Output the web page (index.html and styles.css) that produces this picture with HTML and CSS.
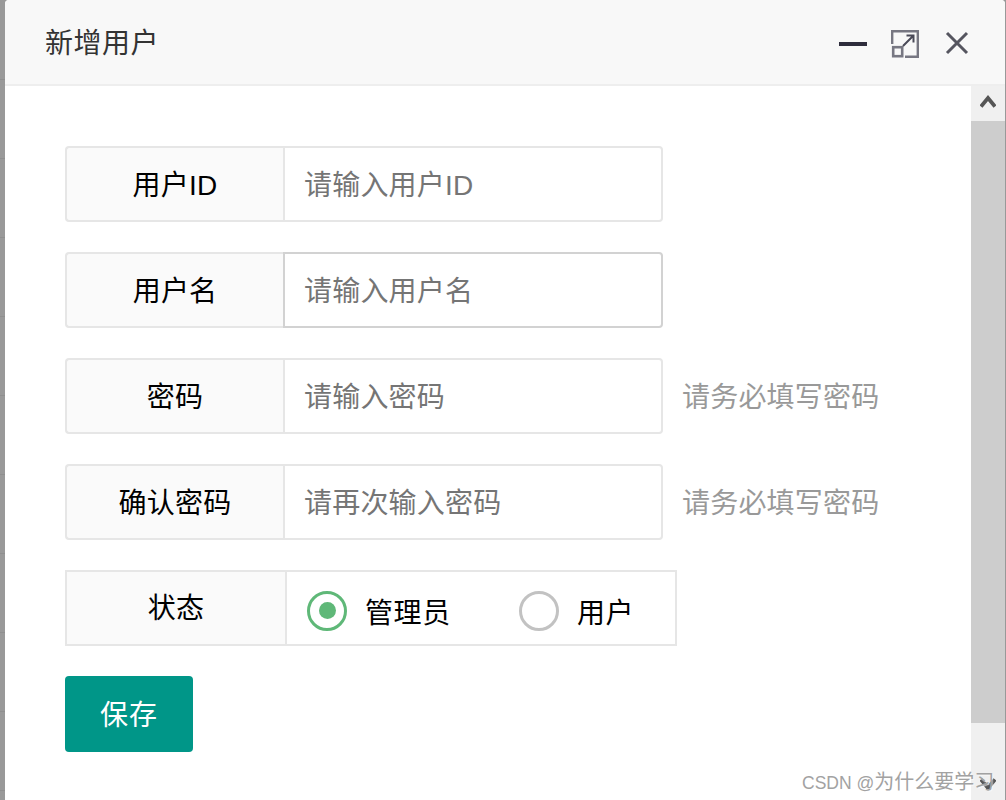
FILE: index.html
```html
<!DOCTYPE html>
<html lang="zh">
<head>
    <meta charset="UTF-8">
    <title>新增用户</title>
    <link rel="stylesheet" href="styles.css">
</head>
<body>
    <div class="backdrop"></div>
    <div class="layer">
        <div class="layer-title">
            <span class="title-text">新增用户</span>
            <div class="title-tools">
                <svg class="tool-min" width="28" height="4" viewBox="0 0 28 4"><rect width="28" height="4" fill="#2e2d3c"/></svg>
                <svg class="tool-max" width="28" height="28" viewBox="0 0 28 28" fill="none" stroke="#777782" stroke-width="2.4">
                    <path d="M1.2 14V1.2H26.8V26.8H14"/>
                    <rect x="2.2" y="17.2" width="9" height="9" stroke-width="2.6"/>
                    <path d="M12 16L22 6M15.5 5.5H22.5V12.5" stroke="#4a4a58" stroke-width="2"/>
                </svg>
                <svg class="tool-close" width="24" height="24" viewBox="0 0 24 24" fill="none" stroke="#55555f" stroke-width="3">
                    <path d="M2 2L22 22M22 2L2 22"/>
                </svg>
            </div>
        </div>
        <div class="layer-body">
            <form class="user-form">
                <div class="form-row">
                    <label class="form-label">用户ID</label>
                    <input class="form-input" type="text" placeholder="请输入用户ID">
                </div>
                <div class="form-row">
                    <label class="form-label">用户名</label>
                    <input class="form-input focused" type="text" placeholder="请输入用户名">
                </div>
                <div class="form-row">
                    <label class="form-label">密码</label>
                    <input class="form-input" type="password" placeholder="请输入密码">
                    <span class="form-aux">请务必填写密码</span>
                </div>
                <div class="form-row">
                    <label class="form-label">确认密码</label>
                    <input class="form-input" type="password" placeholder="请再次输入密码">
                    <span class="form-aux">请务必填写密码</span>
                </div>
                <div class="form-row">
                    <label class="form-label status-label"><span>状态</span></label>
                    <div class="radio-box">
                        <div class="radio-item radio-first">
                            <span class="radio-mark checked"></span>
                            <span class="radio-text">管理员</span>
                        </div>
                        <div class="radio-item">
                            <span class="radio-mark"></span>
                            <span class="radio-text">用户</span>
                        </div>
                    </div>
                </div>
                <button class="save-button" type="button">保存</button>
            </form>
            <div class="scrollbar">
                <div class="scroll-btn">
                    <svg width="16" height="13" viewBox="0 0 16 13" fill="none" stroke="#555" stroke-width="3.8"><path d="M1 11.5L8 3L15 11.5"/></svg>
                </div>
                <div class="scroll-thumb"></div>
                <div class="scroll-track">
                    <svg width="16" height="13" viewBox="0 0 16 13" fill="none" stroke="#555" stroke-width="3.8"><path d="M1 1.5L8 10L15 1.5"/></svg>
                </div>
            </div>
        </div>
    </div>
    <div class="watermark"><span class="watermark-latin">CSDN @</span>为什么要学习</div>
</body>
</html>
```

FILE: styles.css
```css
html, body {
    height: 100%;
}
body {
    margin: 0;
    display: flex;
    height: 800px;
    overflow: hidden;
    background-color: #999;
    font-family: "Liberation Sans", "Noto Sans CJK SC", sans-serif;
    font-size: 28px;
    letter-spacing: 0.2px;
    color: #000;
}
.backdrop {
    width: 5px;
    flex-shrink: 0;
    background: repeating-linear-gradient(180deg, #999 0, #999 78px, #8f8f8f 78px, #8f8f8f 79px);
    background-position: 0 1px;
}
.layer {
    flex: 1;
    display: flex;
    flex-direction: column;
    background-color: #fff;
    border-top-left-radius: 4px;
    border-top-right-radius: 4px;
    overflow: hidden;
    margin-right: 1px;
}

/* Заголовок */
.layer-title {
    height: 84px;
    flex-shrink: 0;
    display: flex;
    align-items: center;
    justify-content: space-between;
    background-color: #f8f8f8;
    border-bottom: 2px solid #eee;
}
.title-text {
    margin-left: 40px;
    margin-top: -2px;
    letter-spacing: 0.5px;
    color: #333;
}
.title-tools {
    display: flex;
    align-items: center;
    margin-right: 36px;
}
.tool-min {
    margin-top: 4px;
    margin-right: 24px;
}
.tool-max {
    margin-top: 3px;
    margin-right: 26px;
}
.tool-close {
    margin-top: 2px;
}

/* Форма */
.layer-body {
    flex: 1;
    display: flex;
    min-height: 0;
}
.user-form {
    flex: 1;
    padding: 60px 0 0 60px;
}
.form-row {
    display: flex;
    align-items: center;
    height: 76px;
    margin-bottom: 30px;
}
.form-label {
    box-sizing: border-box;
    width: 218px;
    height: 76px;
    padding-bottom: 3px;
    display: flex;
    align-items: center;
    justify-content: center;
    background-color: #fafafa;
    border: 2px solid #e6e6e6;
    border-right: none;
    border-radius: 4px 0 0 4px;
}
.status-label {
    width: 220px;
    padding-bottom: 0;
    border-radius: 0;
}
.status-label span {
    margin-top: -4px;
}
.form-input {
    box-sizing: border-box;
    width: 380px;
    height: 76px;
    padding: 3px 19px 0;
    background-color: #fff;
    border: 2px solid #e6e6e6;
    border-radius: 0 4px 4px 0;
    outline: none;
    font-family: inherit;
    font-size: 28px;
    letter-spacing: 0.2px;
    color: #000;
}
.form-input::placeholder {
    color: #757575;
    opacity: 1;
}
.form-input.focused {
    border-color: #d2d2d2;
}
.form-aux {
    margin-left: 19px;
    margin-top: -2px;
    color: #999;
}

/* Радио */
.radio-box {
    box-sizing: border-box;
    width: 392px;
    height: 76px;
    display: flex;
    align-items: center;
    padding-top: 5px;
    padding-left: 20px;
    border: 2px solid #e6e6e6;
}
.radio-item {
    display: flex;
    align-items: center;
    gap: 18px;
}
.radio-first {
    width: 212px;
}
.radio-mark {
    box-sizing: border-box;
    width: 40px;
    height: 40px;
    display: flex;
    align-items: center;
    justify-content: center;
    border: 3px solid #c2c2c2;
    border-radius: 50%;
}
.radio-mark.checked {
    border-color: #5fb878;
}
.radio-mark.checked::after {
    content: "";
    width: 17px;
    height: 17px;
    border-radius: 50%;
    background-color: #5fb878;
}
.radio-text {
    margin-top: 1px;
    letter-spacing: 0.6px;
}
.save-button {
    display: block;
    width: 128px;
    height: 76px;
    padding: 0 0 2px 0;
    border: none;
    border-radius: 4px;
    background-color: #009688;
    color: #fff;
    font-family: inherit;
    font-size: 28px;
    letter-spacing: 1px;
}

/* Полоса прокрутки */
.scrollbar {
    width: 34px;
    flex-shrink: 0;
    display: flex;
    flex-direction: column;
    background-color: #f0f0f0;
}
.scroll-btn {
    height: 35px;
    flex-shrink: 0;
    display: flex;
    justify-content: center;
    padding-top: 9px;
    box-sizing: border-box;
}
.scroll-thumb {
    height: 602px;
    flex-shrink: 0;
    background-color: #cdcdcd;
}
.scroll-track {
    flex: 1;
    display: flex;
    justify-content: center;
    align-items: flex-end;
    padding-bottom: 9px;
}

.watermark {
    position: absolute;
    left: 802px;
    top: 769px;
    font-size: 20px;
    line-height: 26px;
    letter-spacing: 0;
    white-space: nowrap;
    color: #a2a2a2;
    text-shadow: 1px 1px 1px rgba(255, 255, 255, 0.6);
}
.watermark-latin {
    font-size: 17.5px;
}
```
